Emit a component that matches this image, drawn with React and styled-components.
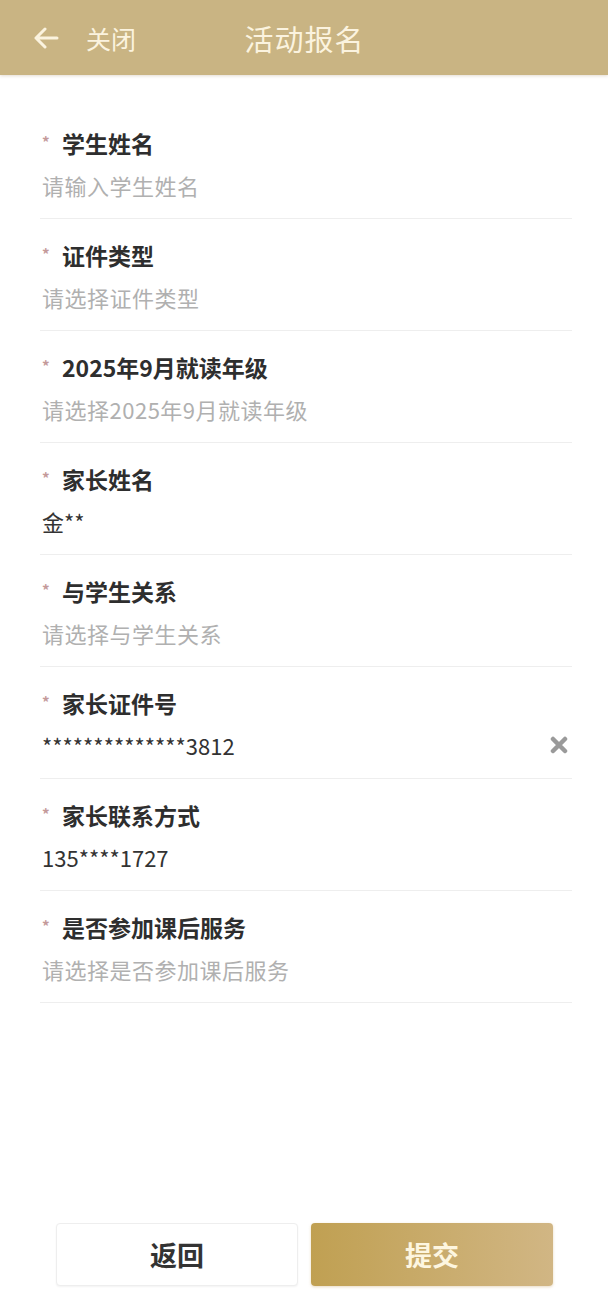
import React from 'react';
import styled, { createGlobalStyle } from 'styled-components';

const GlobalStyle = createGlobalStyle`
  html, body {
    margin: 0;
    padding: 0;
    background: #fff;
  }
  body {
    font-family: "Noto Sans CJK SC", "Noto Sans", Roboto, sans-serif;
  }
`;

const Page = styled.div`
  height: 1315px;
  display: flex;
  flex-direction: column;
  background: #fff;
`;

const Header = styled.div`
  height: 75px;
  flex-shrink: 0;
  display: flex;
  align-items: center;
  position: relative;
  background: #c9b483;
  box-shadow: 0 1px 3px rgba(150, 120, 80, 0.25);
`;

const BackButton = styled.div`
  display: flex;
  align-items: center;
  padding-left: 33px;
  gap: 27px;
  color: #fbf3df;
  font-size: 25px;
`;

const Title = styled.div`
  position: absolute;
  left: 0;
  right: 0;
  text-align: center;
  font-size: 29px;
  color: #fbf3df;
  letter-spacing: 1px;
  pointer-events: none;
  padding-left: 1px;
`;

const Form = styled.div`
  flex: 1;
  padding: 32px 36px 0 40px;
`;

const Row = styled.div`
  padding: 22px 0 19px;
  border-bottom: 1px solid #eeeeee;
`;

const Label = styled.div`
  display: flex;
  align-items: center;
  height: 28px;
  font-size: 23px;
  font-weight: 700;
  color: #2e2e2e;
`;

const Star = styled.span`
  color: #c49a9a;
  font-size: 15px;
  width: 22px;
  padding-left: 2px;
  box-sizing: border-box;
  margin-top: -4px;
`;

const ValueLine = styled.div`
  margin-top: 14px;
  height: 28px;
  display: flex;
  align-items: center;
  justify-content: space-between;
  font-size: 22px;
  letter-spacing: ${p => (p.filled ? '0' : '0.5px')};
  padding-left: 2px;
  color: ${p => (p.filled ? '#333' : '#b0b0b0')};
`;

const Clear = styled.span`
  display: flex;
  margin-right: 4px;
`;

const Footer = styled.div`
  display: flex;
  justify-content: center;
  gap: 13px;
  padding-bottom: 29px;
  padding-left: 1px;
`;

const Button = styled.div`
  width: 242px;
  height: 63px;
  box-sizing: border-box;
  border-radius: 4px;
  display: flex;
  align-items: center;
  justify-content: center;
  font-size: 27px;
  font-weight: 700;
  color: ${p => (p.primary ? '#fdf6e0' : '#333')};
  background: ${p => (p.primary ? 'linear-gradient(90deg, #c0a052 0%, #d1b684 100%)' : '#fff')};
  border: ${p => (p.primary ? 'none' : '1px solid #eeeeee')};
  box-shadow: ${p => (p.primary ? '0 1px 3px rgba(190,150,80,0.35)' : '0 1px 2px rgba(0,0,0,0.05)')};
`;

const fields = [
  { label: '学生姓名', placeholder: '请输入学生姓名' },
  { label: '证件类型', placeholder: '请选择证件类型' },
  { label: '2025年9月就读年级', placeholder: '请选择2025年9月就读年级' },
  { label: '家长姓名', value: '金**' },
  { label: '与学生关系', placeholder: '请选择与学生关系' },
  { label: '家长证件号', value: '**************3812', clearable: true },
  { label: '家长联系方式', value: '135****1727' },
  { label: '是否参加课后服务', placeholder: '请选择是否参加课后服务' },
];

const ArrowLeft = () => (
  <svg width="26" height="22" viewBox="0 0 26 22" fill="none">
    <path d="M24 11H3M12 2L3 11l9 9" stroke="#fbf3df" strokeWidth="3" strokeLinecap="round" strokeLinejoin="round" />
  </svg>
);

const ClearIcon = () => (
  <svg width="18" height="18" viewBox="0 0 18 18">
    <path d="M3 3L15 15M15 3L3 15" stroke="#9a9a9a" strokeWidth="4.5" strokeLinecap="round" />
  </svg>
);

const App = () => (
  <Page>
    <GlobalStyle />
    <Header>
      <BackButton>
        <ArrowLeft />
        <span>关闭</span>
      </BackButton>
      <Title>活动报名</Title>
    </Header>
    <Form>
      {fields.map(f => (
        <Row key={f.label}>
          <Label>
            <Star>*</Star>
            {f.label}
          </Label>
          <ValueLine filled={!!f.value}>
            <span>{f.value || f.placeholder}</span>
            {f.clearable && (
              <Clear>
                <ClearIcon />
              </Clear>
            )}
          </ValueLine>
        </Row>
      ))}
    </Form>
    <Footer>
      <Button>返回</Button>
      <Button primary>提交</Button>
    </Footer>
  </Page>
);

export default App;
